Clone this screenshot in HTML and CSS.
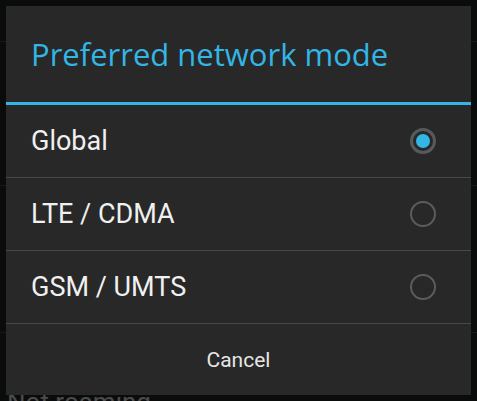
FILE: index.html
```html
<!DOCTYPE html>
<html lang="en">
<head>
    <meta charset="UTF-8">
    <meta name="viewport" content="width=device-width, initial-scale=1.0">
    <title>Preferred network mode</title>
    <link rel="stylesheet" href="styles.css">
</head>
<body>
    <!-- settings list behind the dialog -->
    <div class="screen">
        <div class="bg-row bg-first"></div>
        <div class="bg-row bg-mid"></div>
        <div class="bg-row bg-end"></div>
        <div class="bg-text">Not roaming</div>
    </div>

    <div class="dialog">
        <div class="dialog-title">Preferred network mode</div>
        <ul class="options">
            <li class="option">
                <span class="label">Global</span>
                <span class="radio checked"></span>
            </li>
            <li class="option">
                <span class="label">LTE / CDMA</span>
                <span class="radio"></span>
            </li>
            <li class="option">
                <span class="label">GSM / UMTS</span>
                <span class="radio"></span>
            </li>
        </ul>
        <button class="cancel">Cancel</button>
    </div>
</body>
</html>
```

FILE: styles.css
```css
body {
    margin: 0;
    width: 477px;
    height: 401px;
    overflow: hidden;
    background-color: #0a0b0b;
    font-family: Roboto, "Liberation Sans", sans-serif;
    position: relative;
}

.screen {
    display: flex;
    flex-direction: column;
}

.bg-row {
    border-bottom: 1px solid #191a1a;
    box-sizing: border-box;
}

.bg-first {
    height: 42px;
}

.bg-mid {
    height: 144px;
}

.bg-end {
    height: 147px;
}

.bg-text {
    margin-top: 54px;
    padding-left: 7px;
    color: #4a4c4c;
    font-size: 26px;
    line-height: 30px;
}

/* dialog sits over the list */
.dialog {
    position: absolute;
    top: 6px;
    left: 6px;
    width: 465px;
    height: 389px;
    background-color: #282828;
    display: flex;
    flex-direction: column;
}

.dialog-title {
    height: 99px;
    padding-left: 25px;
    box-sizing: border-box;
    border-bottom: 3px solid #33b5e5;
    color: #33b5e5;
    font-family: "Open Sans", Roboto, sans-serif;
    font-size: 31px;
    line-height: 96px;
}

.options {
    list-style: none;
    margin: 0;
    padding: 0;
}

.option {
    height: 73px;
    border-bottom: 1px solid #484848;
    box-sizing: border-box;
    display: flex;
    align-items: center;
    justify-content: space-between;
    padding: 0 35px 0 25px;
}

.label {
    color: #f0f0f0;
    font-size: 27px;
}

.radio {
    width: 26px;
    height: 26px;
    border: 2px solid #5c5c5c;
    border-radius: 50%;
    box-sizing: border-box;
    display: flex;
    align-items: center;
    justify-content: center;
}

.radio.checked {
    border: 3px solid #555a5c;
}

.radio.checked::after {
    content: "";
    width: 14px;
    height: 14px;
    border-radius: 50%;
    background-color: #33b5e5;
}

.cancel {
    flex: 1;
    background: none;
    border: none;
    color: #e6e6e6;
    font-family: Roboto, "Liberation Sans", sans-serif;
    font-size: 21px;
    padding: 0;
}
```
